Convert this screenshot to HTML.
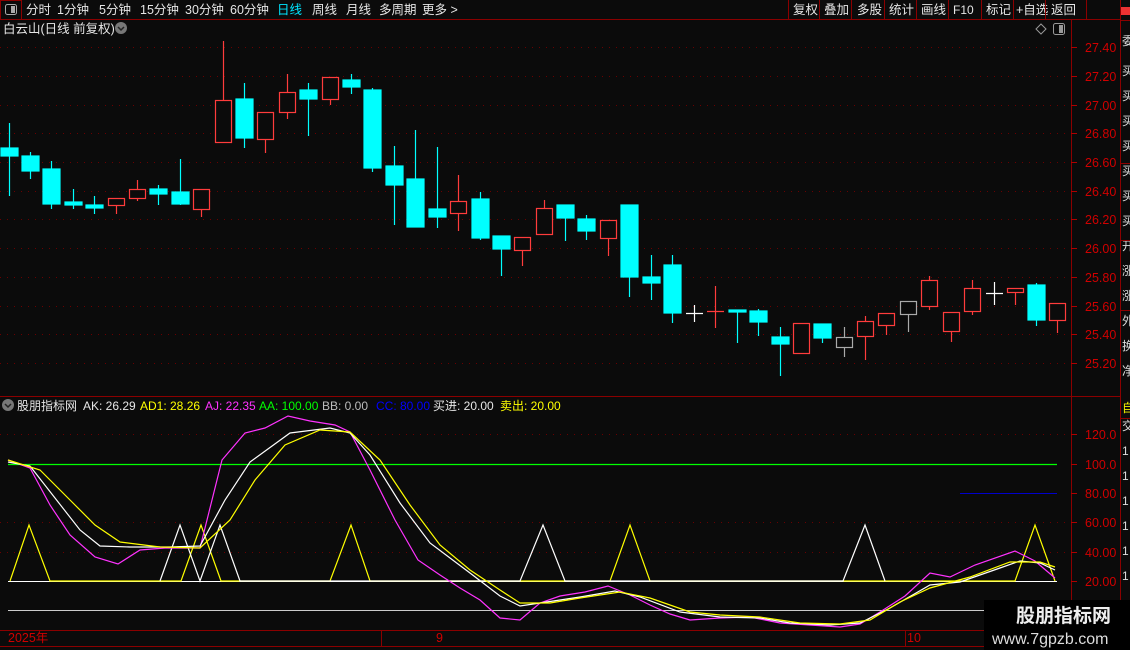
<!DOCTYPE html>
<html><head><meta charset="utf-8"><style>
html,body{margin:0;padding:0;background:#0b0b0b;}
body{width:1130px;height:650px;overflow:hidden;position:relative;font-family:"Liberation Sans","Noto Sans CJK SC",sans-serif;}
svg{position:absolute;left:0;top:0}
</style></head><body>
<svg width="1130" height="650" xmlns="http://www.w3.org/2000/svg" font-family="Liberation Sans, Noto Sans CJK SC, sans-serif">
<rect width="1130" height="650" fill="#0b0b0b"/>
<!-- toolbar -->
<line x1="0" y1="19.5" x2="1121" y2="19.5" stroke="#8b0000"/>
<rect x="0.5" y="0.5" width="21" height="19" fill="none" stroke="#8b0000"/>
<rect x="5.5" y="4.5" width="11" height="10" rx="2" fill="none" stroke="#aaa"/>
<rect x="11" y="6" width="4" height="7" fill="#aaa"/>
<g font-size="12.5" fill="#e6e6e6">
<text x="26" y="14">分时</text><text x="57" y="14">1分钟</text><text x="99" y="14">5分钟</text><text x="140" y="14">15分钟</text><text x="185" y="14">30分钟</text><text x="230" y="14">60分钟</text>
<text x="277" y="14" fill="#00e5ff">日线</text><text x="312" y="14">周线</text><text x="346" y="14">月线</text><text x="379" y="14">多周期</text><text x="422" y="14">更多 &gt;</text>
<text x="793" y="14">复权</text><text x="824" y="14">叠加</text><text x="857" y="14">多股</text><text x="889" y="14">统计</text><text x="921" y="14">画线</text><text x="953" y="14" font-size="12">F10</text><text x="986" y="14">标记</text><text x="1016" y="14">+自选</text><text x="1051" y="14">返回</text>
</g>
<g stroke="#8b0000"><line x1="788.5" y1="0" x2="788.5" y2="19"/><line x1="819.5" y1="0" x2="819.5" y2="19"/><line x1="851.5" y1="0" x2="851.5" y2="19"/><line x1="884.5" y1="0" x2="884.5" y2="19"/><line x1="916.5" y1="0" x2="916.5" y2="19"/><line x1="948.5" y1="0" x2="948.5" y2="19"/><line x1="981.5" y1="0" x2="981.5" y2="19"/><line x1="1013.5" y1="0" x2="1013.5" y2="19"/><line x1="1045.5" y1="0" x2="1045.5" y2="19"/><line x1="1086.5" y1="0" x2="1086.5" y2="19"/></g>
<rect x="1121" y="7" width="9" height="8" fill="#e33"/>
<!-- title -->
<text x="3" y="33" font-size="12.5" fill="#e6e6e6">白云山(日线 前复权)</text>
<circle cx="121" cy="28" r="6" fill="#777"/><path d="M118 27 l3 3 3-3" stroke="#222" stroke-width="1.5" fill="none"/>
<path d="M1041 24 l5 5 -5 5 -5 -5z" fill="none" stroke="#999"/>
<rect x="1053.5" y="23.5" width="11" height="11" rx="2" fill="none" stroke="#999"/><rect x="1059" y="25" width="4" height="8" fill="#999"/>
<!-- frames -->
<line x1="1071.5" y1="20" x2="1071.5" y2="646" stroke="#8b0000"/>
<line x1="1120.5" y1="0" x2="1120.5" y2="650" stroke="#8b0000"/>
<line x1="0" y1="396.5" x2="1121" y2="396.5" stroke="#8b0000"/>
<line x1="0" y1="630.5" x2="1071" y2="630.5" stroke="#8b0000"/>
<line x1="0" y1="646.5" x2="1071" y2="646.5" stroke="#8b0000"/>
<!-- main grid -->
<g stroke="#6a0000" stroke-dasharray="1,6">
<line x1="0" y1="47.5" x2="1071" y2="47.5"/><line x1="0" y1="76.5" x2="1071" y2="76.5"/><line x1="0" y1="105.5" x2="1071" y2="105.5"/><line x1="0" y1="133.5" x2="1071" y2="133.5"/><line x1="0" y1="162.5" x2="1071" y2="162.5"/><line x1="0" y1="191.5" x2="1071" y2="191.5"/><line x1="0" y1="219.5" x2="1071" y2="219.5"/><line x1="0" y1="248.5" x2="1071" y2="248.5"/><line x1="0" y1="277.5" x2="1071" y2="277.5"/><line x1="0" y1="306.5" x2="1071" y2="306.5"/><line x1="0" y1="334.5" x2="1071" y2="334.5"/><line x1="0" y1="363.5" x2="1071" y2="363.5"/>
<line x1="0" y1="434.5" x2="1071" y2="434.5"/><line x1="0" y1="522.5" x2="1071" y2="522.5"/><line x1="0" y1="552.5" x2="1071" y2="552.5"/>
</g>
<g font-size="12.5" fill="#d00000">
<text x="1085" y="52">27.40</text><text x="1085" y="81">27.20</text><text x="1085" y="110">27.00</text><text x="1085" y="138">26.80</text><text x="1085" y="167">26.60</text><text x="1085" y="196">26.40</text><text x="1085" y="224">26.20</text><text x="1085" y="253">26.00</text><text x="1085" y="282">25.80</text><text x="1085" y="311">25.60</text><text x="1085" y="339">25.40</text><text x="1085" y="368">25.20</text>
<text x="1085" y="439">120.0</text><text x="1085" y="469">100.0</text><text x="1085" y="498">80.00</text><text x="1085" y="527">60.00</text><text x="1085" y="557">40.00</text><text x="1085" y="586">20.00</text>
<text x="8" y="642">2025年</text><text x="381" y="642" fill="#000"></text><text x="436" y="642">9</text><text x="907" y="642">10</text>
</g>
<line x1="381.5" y1="630" x2="381.5" y2="646" stroke="#8b0000"/><line x1="905.5" y1="630" x2="905.5" y2="646" stroke="#8b0000"/>
<g stroke="#b00000"><line x1="1071" y1="47.5" x2="1077" y2="47.5"/><line x1="1071" y1="76.5" x2="1077" y2="76.5"/><line x1="1071" y1="105.5" x2="1077" y2="105.5"/><line x1="1071" y1="133.5" x2="1077" y2="133.5"/><line x1="1071" y1="162.5" x2="1077" y2="162.5"/><line x1="1071" y1="191.5" x2="1077" y2="191.5"/><line x1="1071" y1="219.5" x2="1077" y2="219.5"/><line x1="1071" y1="248.5" x2="1077" y2="248.5"/><line x1="1071" y1="277.5" x2="1077" y2="277.5"/><line x1="1071" y1="306.5" x2="1077" y2="306.5"/><line x1="1071" y1="334.5" x2="1077" y2="334.5"/><line x1="1071" y1="363.5" x2="1077" y2="363.5"/><line x1="1071" y1="434.5" x2="1077" y2="434.5"/><line x1="1071" y1="464.5" x2="1077" y2="464.5"/><line x1="1071" y1="493.5" x2="1077" y2="493.5"/><line x1="1071" y1="522.5" x2="1077" y2="522.5"/><line x1="1071" y1="552.5" x2="1077" y2="552.5"/><line x1="1071" y1="581.5" x2="1077" y2="581.5"/></g>
<!-- right strip -->
<g font-size="12" fill="#ddd"><text x="1122" y="45">委</text><text x="1122" y="75">买</text><text x="1122" y="100">买</text><text x="1122" y="125">买</text><text x="1122" y="150">买</text><text x="1122" y="175">买</text><text x="1122" y="200">买</text><text x="1122" y="225">买</text><text x="1122" y="250">开</text><text x="1122" y="275">涨</text><text x="1122" y="300">涨</text><text x="1122" y="325">外</text><text x="1122" y="350">换</text><text x="1122" y="375">净</text>
<text x="1122" y="412" fill="#ee0">自</text><text x="1122" y="430">交</text><text x="1122" y="455">1</text><text x="1122" y="480">1</text><text x="1122" y="505">1</text><text x="1122" y="530">1</text><text x="1122" y="555">1</text><text x="1122" y="580">1</text></g>
<g stroke="#8b0000"><line x1="1121" y1="20.5" x2="1130" y2="20.5"/><line x1="1121" y1="163.5" x2="1130" y2="163.5"/><line x1="1121" y1="240.5" x2="1130" y2="240.5"/><line x1="1121" y1="310.5" x2="1130" y2="310.5"/><line x1="1121" y1="418.5" x2="1130" y2="418.5"/></g>
<!-- candles -->
<g stroke-width="1.2">
<g stroke="#00ffff" fill="#00ffff">
<line x1="9.5" y1="123" x2="9.5" y2="196"/><rect x="1" y="148" width="17" height="8"/>
<line x1="30.5" y1="152" x2="30.5" y2="179"/><rect x="22" y="156" width="17" height="15"/>
<line x1="51.5" y1="161" x2="51.5" y2="209"/><rect x="43" y="169" width="17" height="35"/>
<line x1="73.5" y1="189" x2="73.5" y2="209"/><rect x="65" y="202" width="17" height="3"/>
<line x1="94.5" y1="196" x2="94.5" y2="214"/><rect x="86" y="205" width="17" height="3"/>
<line x1="158.5" y1="185" x2="158.5" y2="205"/><rect x="150" y="189" width="17" height="5"/>
<line x1="180.5" y1="159" x2="180.5" y2="205"/><rect x="172" y="192" width="17" height="12"/>
<line x1="244.5" y1="83" x2="244.5" y2="148"/><rect x="236" y="99" width="17" height="39"/>
<line x1="308.5" y1="83" x2="308.5" y2="136"/><rect x="300" y="90" width="17" height="9"/>
<line x1="351.5" y1="74" x2="351.5" y2="94"/><rect x="343" y="80" width="17" height="7"/>
<line x1="372.5" y1="88" x2="372.5" y2="172"/><rect x="364" y="90" width="17" height="78"/>
<line x1="394.5" y1="146" x2="394.5" y2="225"/><rect x="386" y="166" width="17" height="19"/>
<line x1="415.5" y1="130" x2="415.5" y2="227"/><rect x="407" y="179" width="17" height="48"/>
<line x1="437.5" y1="147" x2="437.5" y2="228"/><rect x="429" y="209" width="17" height="8"/>
<line x1="480.5" y1="192" x2="480.5" y2="240"/><rect x="472" y="199" width="17" height="39"/>
<line x1="501.5" y1="236" x2="501.5" y2="276"/><rect x="493" y="236" width="17" height="13"/>
<line x1="565.5" y1="205" x2="565.5" y2="241"/><rect x="557" y="205" width="17" height="13"/>
<line x1="586.5" y1="215" x2="586.5" y2="240"/><rect x="578" y="219" width="17" height="12"/>
<line x1="629.5" y1="205" x2="629.5" y2="297"/><rect x="621" y="205" width="17" height="72"/>
<line x1="651.5" y1="255" x2="651.5" y2="300"/><rect x="643" y="277" width="17" height="6"/>
<line x1="672.5" y1="255" x2="672.5" y2="323"/><rect x="664" y="265" width="17" height="48"/>
<line x1="737.5" y1="311" x2="737.5" y2="343"/><rect x="729" y="310" width="17" height="2"/>
<line x1="758.5" y1="309" x2="758.5" y2="336"/><rect x="750" y="311" width="17" height="11"/>
<line x1="780.5" y1="327" x2="780.5" y2="376"/><rect x="772" y="337" width="17" height="7"/>
<line x1="822.5" y1="324" x2="822.5" y2="343"/><rect x="814" y="324" width="17" height="14"/>
<line x1="1036.5" y1="283" x2="1036.5" y2="326"/><rect x="1028" y="285" width="17" height="35"/>
</g>
<g stroke="#ff3c3c" fill="#0b0b0b">
<line x1="116.5" y1="198" x2="116.5" y2="214"/><rect x="108.5" y="198.5" width="16" height="7"/>
<line x1="137.5" y1="180" x2="137.5" y2="201"/><rect x="129.5" y="189.5" width="16" height="9"/>
<line x1="201.5" y1="189" x2="201.5" y2="217"/><rect x="193.5" y="189.5" width="16" height="20"/>
<line x1="223.5" y1="41" x2="223.5" y2="142"/><rect x="215.5" y="100.5" width="16" height="42"/>
<line x1="265.5" y1="112" x2="265.5" y2="153"/><rect x="257.5" y="112.5" width="16" height="27"/>
<line x1="287.5" y1="74" x2="287.5" y2="119"/><rect x="279.5" y="92.5" width="16" height="20"/>
<line x1="330.5" y1="77" x2="330.5" y2="105"/><rect x="322.5" y="77.5" width="16" height="22"/>
<line x1="458.5" y1="175" x2="458.5" y2="231"/><rect x="450.5" y="201.5" width="16" height="12"/>
<line x1="522.5" y1="237" x2="522.5" y2="266"/><rect x="514.5" y="237.5" width="16" height="13"/>
<line x1="544.5" y1="200" x2="544.5" y2="234"/><rect x="536.5" y="208.5" width="16" height="26"/>
<line x1="608.5" y1="220" x2="608.5" y2="256"/><rect x="600.5" y="220.5" width="16" height="18"/>
<line x1="715.5" y1="286" x2="715.5" y2="328"/><line x1="707" y1="311.5" x2="724" y2="311.5"/>
<line x1="801.5" y1="323" x2="801.5" y2="353"/><rect x="793.5" y="323.5" width="16" height="30"/>
<line x1="865.5" y1="316" x2="865.5" y2="360"/><rect x="857.5" y="321.5" width="16" height="15"/>
<line x1="886.5" y1="313" x2="886.5" y2="335"/><rect x="878.5" y="313.5" width="16" height="12"/>
<line x1="929.5" y1="276" x2="929.5" y2="310"/><rect x="921.5" y="280.5" width="16" height="26"/>
<line x1="951.5" y1="312" x2="951.5" y2="342"/><rect x="943.5" y="312.5" width="16" height="19"/>
<line x1="972.5" y1="280" x2="972.5" y2="315"/><rect x="964.5" y="288.5" width="16" height="23"/>
<line x1="1015.5" y1="288" x2="1015.5" y2="305"/><rect x="1007.5" y="288.5" width="16" height="4"/>
<line x1="1057.5" y1="303" x2="1057.5" y2="333"/><rect x="1049.5" y="303.5" width="16" height="17"/>
</g>
<g stroke="#aaa" fill="#0b0b0b">
<line x1="844.5" y1="327" x2="844.5" y2="357"/><rect x="836.5" y="337.5" width="16" height="10"/>
<line x1="908.5" y1="301" x2="908.5" y2="332"/><rect x="900.5" y="301.5" width="16" height="13"/>
</g>
<g stroke="#fff"><line x1="694.5" y1="305" x2="694.5" y2="322"/><line x1="686" y1="313.5" x2="703" y2="313.5"/><line x1="994.5" y1="282" x2="994.5" y2="305"/><line x1="986" y1="293.5" x2="1003" y2="293.5"/></g>
</g>
<!-- indicator header -->
<circle cx="8" cy="405" r="6" fill="#777"/><path d="M5 404 l3 3 3-3" stroke="#222" stroke-width="1.5" fill="none"/>
<g font-size="12">
<text x="17" y="410" fill="#e6e6e6">股朋指标网</text><text x="83" y="410" fill="#e6e6e6">AK: 26.29</text><text x="140" y="410" fill="#ffff00">AD1: 28.26</text><text x="205" y="410" fill="#ff33ff">AJ: 22.35</text><text x="259" y="410" fill="#00ff00">AA: 100.00</text><text x="322" y="410" fill="#bbb">BB: 0.00</text><text x="376" y="410" fill="#0000ff">CC: 80.00</text><text x="433" y="410" fill="#e6e6e6">买进: 20.00</text><text x="500" y="410" fill="#ffff00">卖出: 20.00</text>
</g>
<!-- indicator lines -->
<line x1="8" y1="464.5" x2="1057" y2="464.5" stroke="#00ff00" stroke-width="1.2"/>
<line x1="960" y1="493.5" x2="1057" y2="493.5" stroke="#0000cc"/>
<line x1="8" y1="581.5" x2="1057" y2="581.5" stroke="#ffffff"/>
<line x1="8" y1="610.5" x2="1071" y2="610.5" stroke="#ccc"/>
<g fill="none" stroke-width="1.2">
<polyline stroke="#ffff00" points="10,581 29,525 50,581 181,581 201,525 221,581 330,581 351,525 370,581 610,581 630,525 650,581 1015,581 1035,525 1055,581"/>
<polyline stroke="#ffffff" points="160,581 180,525 200,581 220,525 240,581 520,581 543,525 565,581 843,581 865,525 885,581"/>
<polyline stroke="#ff33ff" points="8,460 30,468 50,505 70,535 95,557 118,564 140,550 165,548 200,548 222,460 245,433 265,428 288,416 310,421 335,425 350,432 370,470 395,520 418,560 440,575 460,588 480,600 500,618 520,620 540,603 560,596 585,592 608,586 630,595 650,605 670,614 690,620 720,618 750,617 780,623 810,625 840,627 860,624 880,612 905,596 930,573 950,577 975,565 1015,551 1035,561 1055,578"/>
<polyline stroke="#ffffff" points="8,462 30,466 55,498 80,530 100,546 130,547 170,547 200,546 225,500 250,462 290,433 330,428 350,433 370,455 400,503 430,543 470,573 500,596 520,606 540,603 580,597 615,591 640,597 680,612 720,617 760,618 790,623 830,625 860,623 890,608 930,585 960,582 1000,568 1020,561 1040,563 1055,570"/>
<polyline stroke="#ffff00" points="8,460 40,470 70,500 95,525 120,542 160,547 200,548 230,520 255,480 285,445 320,430 350,432 380,460 410,505 440,545 470,570 500,590 520,603 550,603 580,598 620,592 650,598 690,612 720,615 760,617 800,623 840,624 870,620 900,602 930,588 970,577 1010,562 1040,562 1055,567"/>
</g>
<!-- watermark -->
<rect x="984" y="600" width="146" height="50" fill="#000"/>
<text x="1016" y="622" font-size="19" font-weight="bold" fill="#eee">股朋指标网</text>
<text x="992" y="644" font-size="16" fill="#ddd">www.7gpzb.com</text>
</svg>
</body></html>
